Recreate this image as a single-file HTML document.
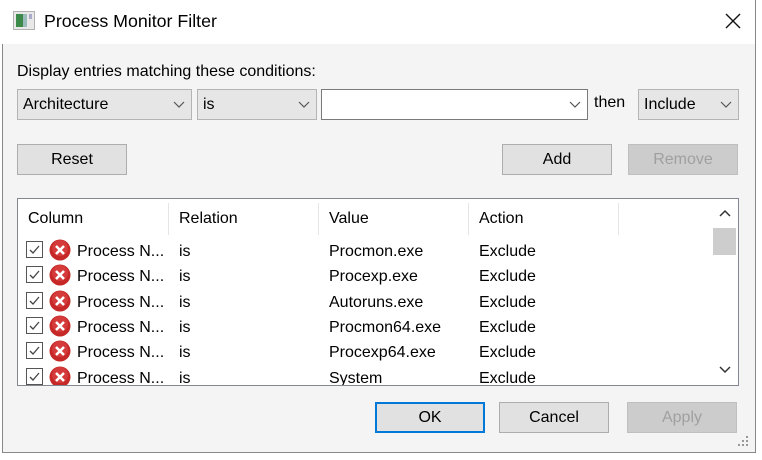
<!DOCTYPE html>
<html><head><style>
*{margin:0;padding:0;box-sizing:border-box}
body{width:762px;height:460px;background:#fff;position:relative;overflow:hidden;font-family:"Liberation Sans",sans-serif;font-size:15px;color:#000}
.a{position:absolute}
.dlg{left:2px;top:0;width:754px;height:453px;background:#f4f4f4;border:1px solid #888;border-top:none}
.title{left:2px;top:0;width:753px;height:44px;background:#fff}
.btn{position:absolute;height:31px;background:#e1e1e1;border:1px solid #adadad;text-align:center;line-height:29px;font-size:16px}
.dis{color:#a0a0a0;background:#cccccc;border-color:#bfbfbf}
.cb{position:absolute;height:31px;background:#e6e6e6;border:1px solid #b4b4b4;line-height:29px;padding-left:5px;font-size:16px}
.chev{position:absolute;right:6px;top:11px;width:12px;height:8px}
.row{position:absolute;left:0;height:25px;width:694px;font-size:16px}
.row span{position:absolute;top:5px}
.chk{position:absolute;left:8px;top:3px;width:17px;height:17px;border:1px solid #555;background:#fff}
.x{position:absolute;left:31px;top:1px;width:22px;height:22px}
.hd{font-size:16px;top:11px}
</style></head><body>
<div class="a dlg"></div>
<div class="a title"></div>
<svg class="a" style="left:13px;top:11px" width="22" height="19"><rect x="0.5" y="0.5" width="21" height="18" fill="#e8e8e8" stroke="#b0b0b0"/><rect x="3" y="3" width="7" height="13" fill="#3c8a4a"/><rect x="10" y="3" width="4" height="13" fill="#9bb"/><rect x="16" y="3" width="3" height="5" fill="#aac"/></svg>
<div class="a" style="left:44px;top:11px;font-size:17.8px">Process Monitor Filter</div>
<svg class="a" style="left:725px;top:13px" width="16" height="16"><path d="M1 1L15 15M15 1L1 15" stroke="#111" stroke-width="1.4"/></svg>
<div class="a" style="left:17px;top:63px;font-size:16px">Display entries matching these conditions:</div>
<div class="cb" style="left:17px;top:89px;width:175px">Architecture<svg class="chev" viewBox="0 0 12 8"><path d="M1 1L6 6L11 1" fill="none" stroke="#555" stroke-width="1.2"/></svg></div>
<div class="cb" style="left:197px;top:89px;width:120px">is<svg class="chev" viewBox="0 0 12 8"><path d="M1 1L6 6L11 1" fill="none" stroke="#555" stroke-width="1.2"/></svg></div>
<div class="cb" style="left:321px;top:89px;width:267px;background:#fff;border-color:#7a7a7a"><svg class="chev" viewBox="0 0 12 8"><path d="M1 1L6 6L11 1" fill="none" stroke="#555" stroke-width="1.2"/></svg></div>
<div class="a" style="left:594px;top:94px;font-size:16px">then</div>
<div class="cb" style="left:638px;top:89px;width:101px">Include<svg class="chev" viewBox="0 0 12 8"><path d="M1 1L6 6L11 1" fill="none" stroke="#555" stroke-width="1.2"/></svg></div>
<div class="btn" style="left:17px;top:144px;width:110px">Reset</div>
<div class="btn" style="left:502px;top:144px;width:110px">Add</div>
<div class="btn dis" style="left:628px;top:144px;width:110px">Remove</div>
<div class="a" style="left:17px;top:198px;width:722px;height:188px;background:#fff;border:1px solid #828790;overflow:hidden">
 <div class="a hd" style="left:10px">Column</div>
 <div class="a hd" style="left:161px">Relation</div>
 <div class="a hd" style="left:311px">Value</div>
 <div class="a hd" style="left:461px">Action</div>
 <div class="a" style="left:150px;top:4px;width:1px;height:32px;background:#e5e5e5"></div>
 <div class="a" style="left:300px;top:4px;width:1px;height:32px;background:#e5e5e5"></div>
 <div class="a" style="left:450px;top:4px;width:1px;height:32px;background:#e5e5e5"></div>
 <div class="a" style="left:600px;top:4px;width:1px;height:32px;background:#e5e5e5"></div>
 <div class="a" style="left:694px;top:0;width:26px;height:186px;background:#fff"></div>
 <svg class="a" style="left:701px;top:10px" width="12" height="8"><path d="M1 7L6 2L11 7" fill="none" stroke="#333" stroke-width="1.5"/></svg>
 <div class="a" style="left:695px;top:29px;width:23px;height:27px;background:#cdcdcd"></div>
 <svg class="a" style="left:701px;top:167px" width="12" height="8"><path d="M1 1L6 6L11 1" fill="none" stroke="#333" stroke-width="1.5"/></svg>
 <div id="rows"></div>
</div>
<div class="btn" style="left:375px;top:402px;width:110px;border:2px solid #0078d7;line-height:27px">OK</div>
<div class="btn" style="left:499px;top:402px;width:110px">Cancel</div>
<div class="btn dis" style="left:627px;top:402px;width:110px">Apply</div>
<svg class="a" style="left:738px;top:436px" width="12" height="12" fill="#999"><rect x="8" y="0" width="2" height="2"/><rect x="4" y="4" width="2" height="2"/><rect x="8" y="4" width="2" height="2"/><rect x="0" y="8" width="2" height="2"/><rect x="4" y="8" width="2" height="2"/><rect x="8" y="8" width="2" height="2"/></svg>
<div class="a" style="left:0;top:453px;width:762px;height:7px;background:#fff"></div>
<script>
var v=["Procmon.exe","Procexp.exe","Autoruns.exe","Procmon64.exe","Procexp64.exe","System"],h="";
for(var i=0;i<6;i++){h+='<div class="row" style="top:'+(39+i*25.3)+'px"><div class="chk"><svg width="15" height="15"><path d="M3 8L6 11L12 4" fill="none" stroke="#444" stroke-width="1.3"/></svg></div><svg class="x" viewBox="0 0 22 22"><circle cx="11" cy="11" r="10.5" fill="#c62828"/><circle cx="11" cy="9" r="8" fill="#e04848" opacity=".6"/><path d="M7 7L15 15M15 7L7 15" stroke="#fff" stroke-width="2.6"/></svg><span style="left:59px">Process N...</span><span style="left:161px">is</span><span style="left:311px">'+v[i]+'</span><span style="left:461px">Exclude</span></div>';}
document.getElementById("rows").innerHTML=h;
</script>
</body></html>
